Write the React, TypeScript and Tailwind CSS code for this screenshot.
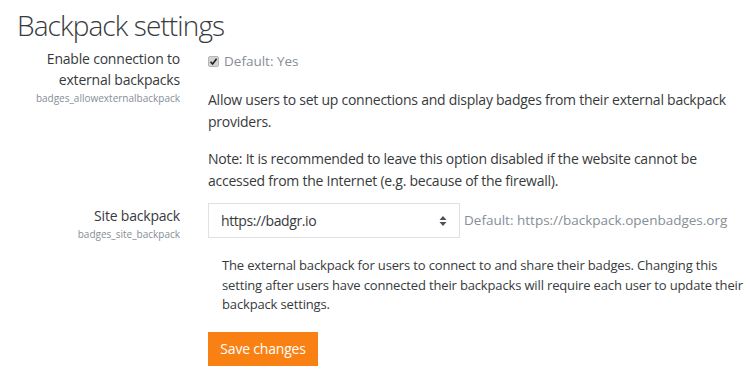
import React from 'react';

const App = () => {
  return (
    <div className="w-[750px] h-[370px] overflow-hidden bg-white text-[#373a3c] font-['Open_Sans',sans-serif]">
      <h1 className="pl-[17px] pt-[5px] text-[28px] font-light leading-[40px] tracking-[-0.9px]">Backpack settings</h1>

      <div className="flex mt-[3px]">
        <div className="w-[180px] shrink-0 text-right">
          <div className="text-[14px] leading-[21px] tracking-[-0.2px]">
            Enable connection to
            <br />
            external backpacks
          </div>
          <div className="text-[10px] leading-[16px] text-[#868e96]">badges_allowexternalbackpack</div>
        </div>
        <div className="ml-[28px] w-[530px]">
          <div className="flex items-center gap-[5px] mt-[4px] h-[18px]">
            <span className="w-[11px] h-[11px] rounded-[2px] bg-[#d4d4d4] border border-[#b5b5b5] flex items-center justify-center">
              <svg width="9" height="9" viewBox="0 0 9 9">
                <path d="M1.5 4.8 L3.6 7 L7.6 1.8" fill="none" stroke="#1f1f1f" strokeWidth="1.6" />
              </svg>
            </span>
            <span className="text-[13.5px] text-[#868e96]">Default: Yes</span>
          </div>
          <p className="mt-[19px] text-[14px] leading-[22px] tracking-[-0.25px]">
            Allow users to set up connections and display badges from their external backpack providers.
          </p>
          <p className="mt-[15px] text-[14px] leading-[22px] tracking-[-0.25px]">
            Note: It is recommended to leave this option disabled if the website cannot be accessed from the Internet
            (e.g. because of the firewall).
          </p>
        </div>
      </div>

      <div className="flex mt-[11px]">
        <div className="w-[180px] shrink-0 text-right pt-[2px]">
          <div className="text-[14px] leading-[21px] tracking-[-0.2px]">Site backpack</div>
          <div className="text-[10px] leading-[16px] text-[#868e96]">badges_site_backpack</div>
        </div>
        <div className="ml-[28px]">
          <div className="flex items-center">
            <div className="w-[252px] h-[35px] border border-[#dee2e6] flex items-center justify-between pl-[12px] pr-[12px] text-[14px] tracking-[-0.4px]">
              <span>https://badgr.io</span>
              <svg width="8" height="12" viewBox="0 0 8 12">
                <path d="M4 1 L7.5 5 L0.5 5 Z" fill="#495057" />
                <path d="M4 11 L7.5 7 L0.5 7 Z" fill="#495057" />
              </svg>
            </div>
            <span className="ml-[4px] text-[13.5px] text-[#868e96]">Default: https://backpack.openbadges.org</span>
          </div>
          <p className="mt-[18px] ml-[14px] w-[528px] text-[13px] leading-[19.5px] tracking-[-0.15px]">
            The external backpack for users to connect to and share their badges. Changing this setting after users have
            connected their backpacks will require each user to update their backpack settings.
          </p>
          <button className="mt-[17px] h-[34px] w-[110px] bg-[#f98012] text-white text-[14px] tracking-[-0.2px]">
            Save changes
          </button>
        </div>
      </div>
    </div>
  );
};

export default App;
